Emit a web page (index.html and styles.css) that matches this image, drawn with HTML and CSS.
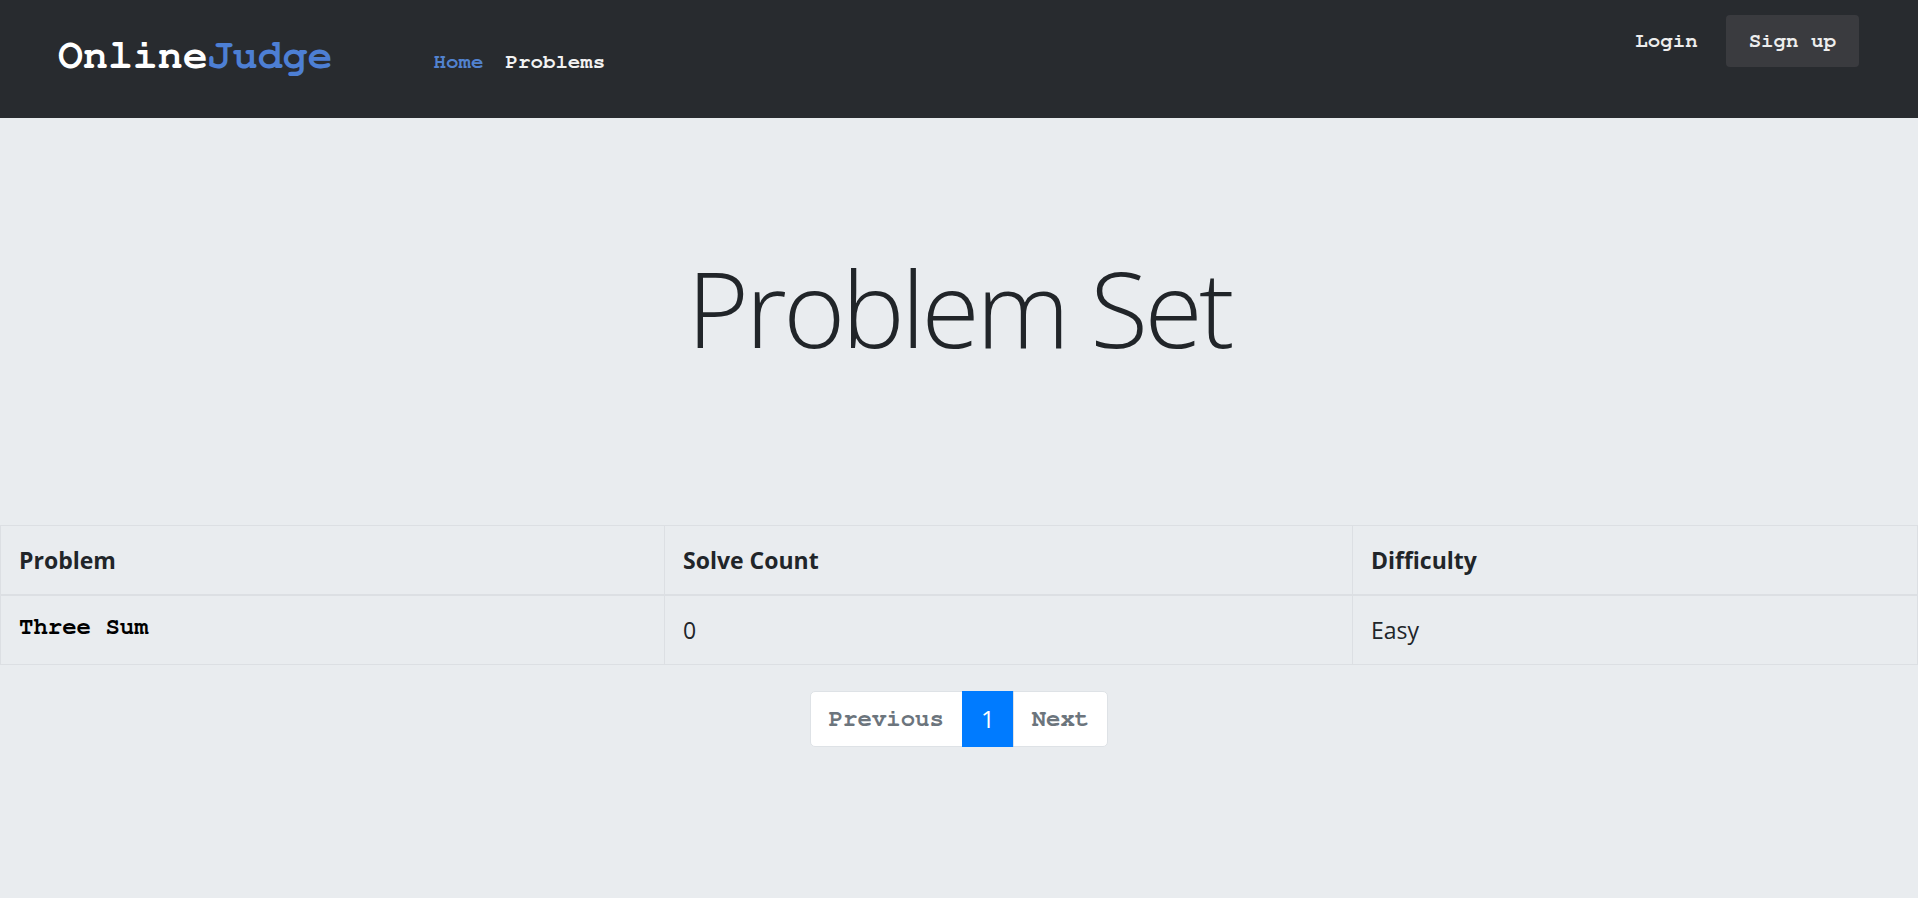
FILE: index.html
```html
<!DOCTYPE html>
<html lang="en">
<head>
<meta charset="utf-8">
<title>OnlineJudge - Problem Set</title>
<link rel="stylesheet" href="styles.css">
</head>
<body>
<header class="navbar">
  <div class="nav-left">
    <a class="brand" href="#"><span class="brand-main">Online</span><span class="brand-accent">Judge</span></a>
    <nav class="nav-links">
      <a class="nav-link active" href="#">Home</a>
      <a class="nav-link" href="#">Problems</a>
    </nav>
  </div>
  <div class="nav-right">
    <a class="nav-login" href="#">Login</a>
    <a class="nav-signup" href="#">Sign up</a>
  </div>
</header>
<main>
  <section class="hero">
    <h1 class="hero-title">Problem Set</h1>
  </section>
  <table class="problems">
    <colgroup>
      <col class="col-problem">
      <col class="col-solve">
      <col class="col-diff">
    </colgroup>
    <thead>
      <tr>
        <th>Problem</th>
        <th>Solve Count</th>
        <th>Difficulty</th>
      </tr>
    </thead>
    <tbody>
      <tr>
        <td><a class="problem-link" href="#">Three Sum</a></td>
        <td>0</td>
        <td>Easy</td>
      </tr>
    </tbody>
  </table>
  <nav class="pager">
    <ul class="pagination">
      <li class="page-item"><a class="page-link mono" href="#">Previous</a></li>
      <li class="page-item current"><a class="page-link" href="#">1</a></li>
      <li class="page-item"><a class="page-link mono" href="#">Next</a></li>
    </ul>
  </nav>
</main>
</body>
</html>
```
FILE: styles.css
```css
* { box-sizing: border-box; }
html, body { margin: 0; padding: 0; }
body {
  background: #e9ecef;
  font-family: "Open Sans", "Noto Sans", sans-serif;
  color: #212529;
}
a { text-decoration: none; }

.mono, .brand, .nav-link, .nav-login, .nav-signup, .problem-link {
  font-family: "Nimbus Mono PS", "Nimbus Mono L", "FreeMono", "Liberation Mono", "Courier New", monospace;
  font-weight: 700;
}

.navbar {
  height: 118px;
  background: #282b2f;
  display: flex;
  justify-content: space-between;
  align-items: flex-start;
  padding: 0 59px 0 58px;
}
.nav-left {
  display: flex;
  align-items: baseline;
  margin-top: 35px;
}
.brand {
  font-size: 41.6px;
  line-height: 1;
  color: #ffffff;
  margin-right: 90px;
}
.brand-accent { color: #4d7fd4; }
.nav-links { display: flex; }
.nav-link {
  font-size: 20.8px;
  line-height: 1;
  color: #f2f2f2;
  padding: 0 11px;
}
.nav-link.active { color: #5282cf; }

.nav-right {
  display: flex;
  align-items: baseline;
  margin-top: 15px;
}
.nav-login, .nav-signup {
  font-size: 20.8px;
  line-height: 1;
  color: #ededed;
}
.nav-login { margin-right: 28px; }
.nav-signup {
  background: #3a3b3f;
  border-radius: 4px;
  padding: 16px 23px 15px;
}

.hero {
  padding: 136px 0 165px;
  text-align: center;
}
.hero-title {
  margin: 0;
  font-size: 106px;
  line-height: 1;
  font-weight: 300;
  letter-spacing: -3.6px;
  color: #212529;
}

.problems {
  width: 100%;
  border-collapse: collapse;
  font-size: 23px;
  line-height: 36px;
}
.col-problem { width: 664px; }
.col-solve { width: 688px; }
.problems th, .problems td {
  border: 1px solid #dcdfe3;
  padding: 16px 18px;
  text-align: left;
  vertical-align: top;
}
.problems th {
  font-weight: 700;
  border-bottom-width: 2px;
}
.problems td { font-weight: 400; }
.problem-link {
  display: block;
  font-size: 24px;
  line-height: 26px;
  padding-top: 2px;
  margin-bottom: 8px;
  color: #000000;
}

.pager {
  display: flex;
  justify-content: center;
  margin-top: 26px;
}
.pagination {
  display: flex;
  list-style: none;
  margin: 0;
  padding: 0;
}
.page-link {
  display: block;
  height: 56px;
  line-height: 54px;
  padding: 0 18px;
  background: #ffffff;
  border: 1px solid #dee2e6;
  margin-left: -1px;
  color: #6c757d;
  font-size: 24px;
}
.page-item:first-child .page-link { margin-left: 0; border-radius: 5px 0 0 5px; }
.page-item:last-child .page-link { border-radius: 0 5px 5px 0; }
.page-item.current .page-link {
  background: #007bff;
  border-color: #007bff;
  color: #ffffff;
}
```
